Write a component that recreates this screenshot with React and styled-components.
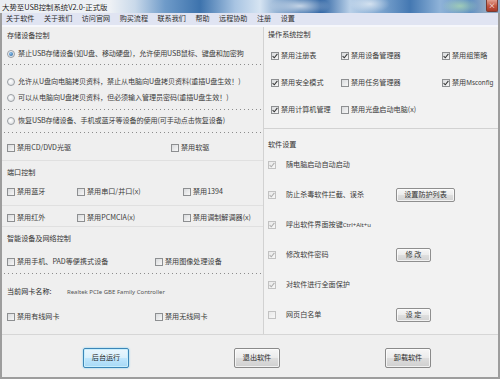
import React from 'react';
import styled, { createGlobalStyle } from 'styled-components';

const Global = createGlobalStyle`
  html, body { margin: 0; padding: 0; background: #ffffff; }
  body { font-family: "Noto Sans CJK SC", "Noto Sans", sans-serif; }
`;

const Window = styled.div`
  width: 500px;
  height: 381px;
  display: flex;
  flex-direction: column;
  overflow: hidden;
  background: #ffffff;
  color: #3a3a3a;
  font-size: 7.1px;
  line-height: 1;
`;

const TitleBar = styled.div`
  height: 13px;
  flex: none;
  display: flex;
  align-items: center;
  justify-content: space-between;
  background:
    radial-gradient(ellipse 30px 10px at 300px 6px, rgba(255,255,255,0.7), transparent),
    radial-gradient(ellipse 20px 9px at 370px 4px, rgba(255,255,255,0.6), transparent),
    radial-gradient(ellipse 18px 8px at 460px 6px, rgba(170,215,180,0.8), transparent),
    linear-gradient(90deg, #e9edf2 0%, #eef1f5 22%, #c9d9ea 27%, #6f9bc9 33%, #3d73ad 40%,
      #a8c4e2 47%, #d6e4f2 52%, #3a6fab 60%, #2c62a2 64%, #b9d0e8 70%, #7ea6d0 76%,
      #4478b2 82%, #8fb3d8 88%, #5f8fc2 94%, #8fa9c4 97%);
`;

const TitleText = styled.span`
  padding-left: 2px;
  font-size: 7.4px;
  color: #1c1c1c;
  text-shadow: 0 0 3px #ffffff, 0 0 2px #ffffff;
`;

const CloseButton = styled.span`
  width: 10px;
  height: 11px;
  margin: 0 2px 1px 0;
  border-radius: 0 0 2px 2px;
  background: linear-gradient(#e2a090, #c2543f 55%, #a83a28);
  border: 1px solid #7a3a30;
  border-top: none;
  color: #fff;
  font-size: 7px;
  display: flex;
  align-items: center;
  justify-content: center;
`;

const Frame = styled.div`
  flex: 1;
  display: flex;
  flex-direction: column;
  background: #efefef;
  border: 2px solid #9d9d9d;
  border-top: none;
  margin-bottom: 2px;
`;

const MenuBar = styled.div`
  height: 12px;
  flex: none;
  display: flex;
  align-items: center;
  gap: 9.5px;
  padding-left: 4px;
  background: #e0e4f2;
  border-bottom: 2px solid #f6f7fb;
`;

const MenuItem = styled.span`
  color: #2c2c2c;
`;

const Body = styled.div`
  height: 307px;
  flex: none;
  display: flex;
  border-bottom: 1px solid #d6d6d6;
`;

const LeftCol = styled.div`
  width: 261px;
  flex: none;
  display: flex;
  flex-direction: column;
`;

const RightCol = styled.div`
  flex: 1;
  display: flex;
  flex-direction: column;
  background: #f2f2f2;
  border-left: 1px solid #d2d2d2;
`;

const GroupTitle = styled.div`
  height: ${p => p.$h}px;
  box-sizing: border-box;
  padding: ${p => p.$pt || 0}px 0 0 ${p => p.$pl}px;
  display: flex;
  align-items: center;
  flex: none;
  color: #333;
`;

const Dotted = styled.div`
  height: 1px;
  flex: none;
  margin: ${p => p.$mt || 0}px 2px ${p => p.$mb || 0}px 2px;
  background: repeating-linear-gradient(90deg, #8c8c8c 0 1px, transparent 1px 4px);
`;

const Rule = styled.div`
  height: 1px;
  flex: none;
  margin: ${p => p.$mt || 0}px 0 ${p => p.$mb || 0}px 0;
  background: ${p => p.$strong ? '#d2d2d2' : '#e0e0e0'};
`;

const Row = styled.div`
  height: ${p => p.$h}px;
  flex: none;
  display: grid;
  grid-template-columns: ${p => p.$cols};
  align-items: center;
  padding-left: ${p => p.$pl}px;
`;

const Option = styled.label`
  display: flex;
  align-items: center;
  gap: 2px;
  white-space: nowrap;
`;

const BoxMark = styled.span`
  width: 6px;
  height: 6px;
  flex: none;
  border: 1px solid ${p => p.$disabled ? '#c2c2c2' : '#8d8f91'};
  background: ${p => p.$disabled
    ? 'linear-gradient(135deg, #e9e9e9, #f7f7f7)'
    : 'linear-gradient(135deg, #d9dbdd, #f7f7f7)'};
  display: flex;
  align-items: center;
  justify-content: center;
`;

const RadioMark = styled.span`
  width: 6px;
  height: 6px;
  flex: none;
  border-radius: 50%;
  border: 1px solid #9a9ea3;
  background: radial-gradient(circle at 40% 40%, #ffffff, #d5d8dc);
  display: flex;
  align-items: center;
  justify-content: center;
  &::after {
    content: '';
    width: 4px;
    height: 4px;
    border-radius: 50%;
    background: ${p => p.$checked ? 'radial-gradient(circle at 40% 35%, #8fc3ee, #1f5d99)' : 'transparent'};
  }
`;

const Tick = ({ color }) => (
  <svg width="6" height="6" viewBox="0 0 6 6">
    <path d="M0.6 3.1 L2.3 4.8 L5.4 0.9" fill="none" stroke={color} strokeWidth="1.1" />
  </svg>
);

const Check = ({ label, checked, disabled }) => (
  <Option>
    <BoxMark $disabled={disabled}>
      {checked && <Tick color={disabled ? '#b0b0b0' : '#3a3a3a'} />}
    </BoxMark>
    {label && <span>{label}</span>}
  </Option>
);

const RadioRow = styled.label`
  height: ${p => p.$h}px;
  flex: none;
  display: flex;
  align-items: center;
  gap: 3px;
  padding-left: 5px;
  white-space: nowrap;
  letter-spacing: -0.1px;
`;

const Radio = ({ h, checked, children }) => (
  <RadioRow $h={h}>
    <RadioMark $checked={checked} />
    <span>{children}</span>
  </RadioRow>
);

const Latin = styled.span`
  font-family: "Noto Sans", "Liberation Sans", sans-serif;
  font-size: ${p => p.$size || 6}px;
  color: ${p => p.$muted ? '#555' : 'inherit'};
`;

const NicRow = styled.div`
  height: ${p => p.$h}px;
  flex: none;
  display: grid;
  grid-template-columns: 60px auto;
  align-items: center;
  padding-left: 5px;
  color: #2a2a2a;
`;

const SetRow = styled.div`
  height: 30px;
  flex: none;
  display: grid;
  grid-template-columns: 18px 110px auto;
  align-items: center;
  padding-left: 4px;
`;

const SmallButton = styled.button`
  width: ${p => p.$w}px;
  height: 14px;
  padding: 0;
  font: inherit;
  font-size: 7.1px;
  color: #333;
  border: 1px solid #8f8f8f;
  border-radius: 2px;
  background: linear-gradient(#f7f7f7 0%, #ececec 48%, #dedede 52%, #d2d2d2 100%);
  box-shadow: inset 0 0 0 1px rgba(255,255,255,0.7);
`;

const Footer = styled.div`
  flex: 1;
  display: flex;
  align-items: flex-start;
  gap: 105px;
  padding: 13px 0 0 81px;
`;

const BigButton = styled.button`
  width: 46px;
  height: 20px;
  padding: 0;
  font: inherit;
  font-size: 7.1px;
  color: #2a2a2a;
  border-radius: 2px;
  border: 1px solid ${p => p.$primary ? '#3b86b8' : '#8a8a8a'};
  background: ${p => p.$primary
    ? 'linear-gradient(#eaf6fd 0%, #d9f0fc 48%, #bee6fd 52%, #a7d9f5 100%)'
    : 'linear-gradient(#f6f6f6 0%, #ebebeb 48%, #dddddd 52%, #cfcfcf 100%)'};
  box-shadow: ${p => p.$primary ? 'inset 0 0 0 1px #c8eefc, 0 0 2px #6cc8f0' : 'inset 0 0 0 1px rgba(255,255,255,0.7)'};
`;

const menus = ['关于软件', '关于我们', '访问官网', '购买流程', '联系我们', '帮助', '远程协助', '注册', '设置'];

export default function App() {
  return (
    <Window>
      <Global />
      <TitleBar>
        <TitleText>大势至USB控制系统V2.0-正式版</TitleText>
        <CloseButton>×</CloseButton>
      </TitleBar>
      <Frame>
        <MenuBar>
          {menus.map(m => <MenuItem key={m}>{m}</MenuItem>)}
        </MenuBar>
        <Body>
          <LeftCol>
            <GroupTitle $h={18} $pl={5}>存储设备控制</GroupTitle>
            <Radio h={18} checked>禁止USB存储设备(如U盘、移动硬盘)，允许使用USB鼠标、键盘和加密狗</Radio>
            <Dotted $mt={1} $mb={9} />
            <Radio h={16}>允许从U盘向电脑拷贝资料，禁止从电脑向U盘拷贝资料(重插U盘生效！)</Radio>
            <Radio h={16}>可以从电脑向U盘拷贝资料，但必须输入管理员密码(重插U盘生效！)</Radio>
            <Dotted $mt={3} $mb={3} />
            <Radio h={16}>恢复USB存储设备、手机或蓝牙等设备的使用(可手动点击恢复设备)</Radio>
            <Dotted $mt={3} $mb={7} />
            <Row $h={16} $cols="164px auto" $pl={5}>
              <Check label="禁用CD/DVD光驱" />
              <Check label="禁用软驱" />
            </Row>
            <Rule $mt={4} />
            <GroupTitle $h={23} $pl={5}>端口控制</GroupTitle>
            <Row $h={16} $cols="70px 106px auto" $pl={5}>
              <Check label="禁用蓝牙" />
              <Check label="禁用串口/并口(x)" />
              <Check label="禁用1394" />
            </Row>
            <Rule $mt={5} $mb={4} />
            <Row $h={16} $cols="70px 106px auto" $pl={5}>
              <Check label="禁用红外" />
              <Check label="禁用PCMCIA(x)" />
              <Check label="禁用调制解调器(x)" />
            </Row>
            <Rule />
            <GroupTitle $h={24} $pl={5}>智能设备及网络控制</GroupTitle>
            <Row $h={22} $cols="148px auto" $pl={5}>
              <Check label="禁用手机、PAD等便携式设备" />
              <Check label="禁用图像处理设备" />
            </Row>
            <Dotted />
            <NicRow $h={36}>
              <span>当前网卡名称:</span>
              <Latin $muted>Realtek PCIe GBE Family Controller</Latin>
            </NicRow>
            <Row $h={14} $cols="148px auto" $pl={5}>
              <Check label="禁用有线网卡" />
              <Check label="禁用无线网卡" />
            </Row>
          </LeftCol>
          <RightCol>
            <GroupTitle $h={15} $pl={4}>操作系统控制</GroupTitle>
            <Row $h={27} $cols="70px 101px auto" $pl={7}>
              <Check checked label="禁用注册表" />
              <Check checked label="禁用设备管理器" />
              <Check checked label="禁用组策略" />
            </Row>
            <Row $h={27} $cols="70px 101px auto" $pl={7}>
              <Check checked label="禁用安全模式" />
              <Check label="禁用任务管理器" />
              <Check checked label={<>禁用<Latin $size={6.3}>Msconfig</Latin></>} />
            </Row>
            <Row $h={27} $cols="70px 101px auto" $pl={7}>
              <Check checked label="禁用计算机管理" />
              <Check label="禁用光盘启动电脑(x)" />
            </Row>
            <Rule $mt={5} $strong />
            <GroupTitle $h={21} $pt={11} $pl={4}>软件设置</GroupTitle>
            <SetRow>
              <Check checked disabled />
              <span>随电脑启动自动启动</span>
            </SetRow>
            <SetRow>
              <Check checked disabled />
              <span>防止杀毒软件拦截、误杀</span>
              <SmallButton $w={59}>设置防护列表</SmallButton>
            </SetRow>
            <SetRow>
              <Check checked disabled />
              <span>呼出软件界面按键<Latin>Ctrl+Alt+u</Latin></span>
            </SetRow>
            <SetRow>
              <Check checked disabled />
              <span>修改软件密码</span>
              <SmallButton $w={35}>修 改</SmallButton>
            </SetRow>
            <SetRow>
              <Check checked disabled />
              <span>对软件进行全面保护</span>
            </SetRow>
            <SetRow>
              <Check disabled />
              <span>网页白名单</span>
              <SmallButton $w={35}>设 定</SmallButton>
            </SetRow>
          </RightCol>
        </Body>
        <Footer>
          <BigButton $primary>后台运行</BigButton>
          <BigButton>退出软件</BigButton>
          <BigButton>卸载软件</BigButton>
        </Footer>
      </Frame>
    </Window>
  );
}
